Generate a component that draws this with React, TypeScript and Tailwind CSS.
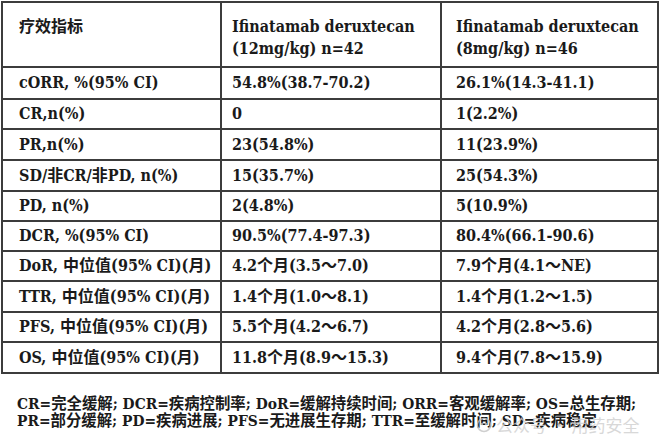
import React from "react";

const rows: { a: string; b: string; c: string; h: string }[] = [
  { a: "cORR, %(95% CI)", b: "54.8%(38.7-70.2)", c: "26.1%(14.3-41.1)", h: "h-[32px]" },
  { a: "CR,n(%)", b: "0", c: "1(2.2%)", h: "h-[30px]" },
  { a: "PR,n(%)", b: "23(54.8%)", c: "11(23.9%)", h: "h-[31px]" },
  { a: "SD/非CR/非PD, n(%)", b: "15(35.7%)", c: "25(54.3%)", h: "h-[31px]" },
  { a: "PD, n(%)", b: "2(4.8%)", c: "5(10.9%)", h: "h-[30px]" },
  { a: "DCR, %(95% CI)", b: "90.5%(77.4-97.3)", c: "80.4%(66.1-90.6)", h: "h-[30px]" },
  { a: "DoR, 中位值(95% CI)(月)", b: "4.2个月(3.5～7.0)", c: "7.9个月(4.1～NE)", h: "h-[30px]" },
  { a: "TTR, 中位值(95% CI)(月)", b: "1.4个月(1.0～8.1)", c: "1.4个月(1.2～1.5)", h: "h-[31px]" },
  { a: "PFS, 中位值(95% CI)(月)", b: "5.5个月(4.2～6.7)", c: "4.2个月(2.8～5.6)", h: "h-[30px]" },
  { a: "OS, 中位值(95% CI)(月)", b: "11.8个月(8.9～15.3)", c: "9.4个月(7.8～15.9)", h: "h-[31px]" },
];

const font = {
  fontFamily: '"DejaVu Serif Condensed", "Noto Sans CJK SC", serif',
};

const cell = "border-2 border-[#3c3c3c] align-middle whitespace-nowrap";

export default function App() {
  return (
    <div
      className="w-[660px] h-[448px] bg-white text-[#1a1a1a] relative overflow-hidden font-bold"
      style={font}
    >
      <div className="pl-px pt-px">
        <table className="border-collapse w-[656px] table-fixed text-[16px] leading-[22px]">
          <colgroup>
            <col className="w-[219px]" />
            <col className="w-[220px]" />
            <col className="w-[217px]" />
          </colgroup>
          <tbody>
            <tr className="h-[65px]">
              <td className={`${cell} pl-[16px] !align-top pt-[13px]`}>疗效指标</td>
              <td className={`${cell} pl-[10px] !align-top pt-[13px]`}>
                <div>Ifinatamab deruxtecan</div>
                <div>(12mg/kg) n=42</div>
              </td>
              <td className={`${cell} pl-[14px] !align-top pt-[13px]`}>
                <div>Ifinatamab deruxtecan</div>
                <div>(8mg/kg) n=46</div>
              </td>
            </tr>
            {rows.map((r, i) => (
              <tr key={i} className={r.h}>
                <td className={`${cell} pl-[16px]`}>{r.a}</td>
                <td className={`${cell} pl-[10px]`}>{r.b}</td>
                <td className={`${cell} pl-[14px]`}>{r.c}</td>
              </tr>
            ))}
          </tbody>
        </table>
      </div>
      <div className="pl-[17px] pt-[22px] text-[15.4px] leading-[17px] whitespace-nowrap">
        <div>CR=完全缓解; DCR=疾病控制率; DoR=缓解持续时间; ORR=客观缓解率; OS=总生存期;</div>
        <div>PR=部分缓解; PD=疾病进展; PFS=无进展生存期; TTR=至缓解时间; SD=疾病稳定</div>
      </div>
      <div
        className="absolute left-[476px] top-[412px] flex items-center gap-[4px] text-[17px] font-normal text-[#cfcfcf] whitespace-nowrap opacity-80"
        style={{ fontFamily: '"Noto Sans CJK SC", sans-serif' }}
      >
        <svg width="16" height="16" viewBox="0 0 16 16">
          <circle cx="8" cy="8" r="6.5" fill="none" stroke="#c4c4c4" strokeWidth="1.5" />
          <circle cx="6" cy="7" r="1.2" fill="#c4c4c4" />
          <circle cx="10" cy="7" r="1.2" fill="#c4c4c4" />
        </svg>
        <span>公众号 · 用药安全</span>
      </div>
    </div>
  );
}
